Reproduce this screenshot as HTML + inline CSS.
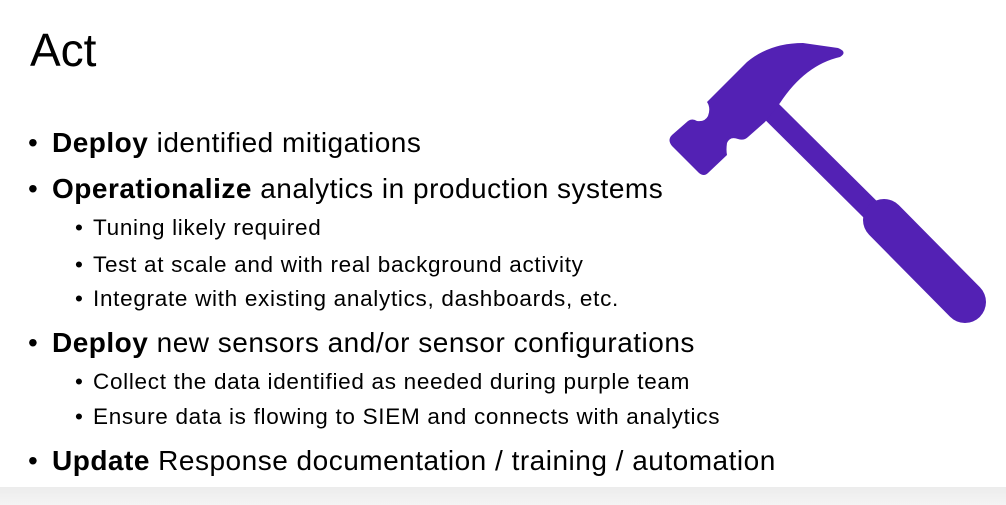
<!DOCTYPE html>
<html><head><meta charset="utf-8"><style>
html,body{margin:0;padding:0}
body{width:1006px;height:505px;background:#fff;position:relative;overflow:hidden;font-family:"Liberation Sans",sans-serif;color:#000}
.t{position:absolute;white-space:nowrap}
.h{left:30px;top:23px;font-size:46px}
.l1{font-size:28px;left:52px;letter-spacing:0.5px}
.l1:before{content:"•";position:absolute;left:-24px}
.l2{font-size:22.5px;left:93px;letter-spacing:0.7px}
.l2:before{content:"•";position:absolute;left:-18px}
.bar{position:absolute;left:0;top:487px;width:1006px;height:18px;background:linear-gradient(#ececec,#f4f4f4)}
</style></head><body>
<div class="t h">Act</div>
<div class="t l1" style="top:127px"><b>Deploy</b> identified mitigations</div>
<div class="t l1" style="top:173px"><b>Operationalize</b> analytics in production systems</div>
<div class="t l2" style="top:215px">Tuning likely required</div>
<div class="t l2" style="top:252px">Test at scale and with real background activity</div>
<div class="t l2" style="top:286px">Integrate with existing analytics, dashboards, etc.</div>
<div class="t l1" style="top:327px"><b>Deploy</b> new sensors and/or sensor configurations</div>
<div class="t l2" style="top:369px">Collect the data identified as needed during purple team</div>
<div class="t l2" style="top:404px">Ensure data is flowing to SIEM and connects with analytics</div>
<div class="t l1" style="top:445px"><b>Update</b> Response documentation / training / automation</div>
<div class="bar"></div>
<svg style="position:absolute;left:0;top:0" width="1006" height="505">
<g fill="#5321b4" stroke="#5321b4">
<line x1="760" y1="100" x2="885" y2="224" stroke-width="21"/>
<line x1="884" y1="220" x2="965" y2="302" stroke-width="42" stroke-linecap="round"/>
<path stroke="none" d="M707,102 L747,62 Q770,43 803,43 L838,48 Q848,52 840,57 Q805,65 780,103 L765,122 L748,137 Q744,141 738,139 Q730,136 727,143 Q726,150 727,155 L708,173 Q704,177 699,173 L672,146 Q667,140 672,135 L688,121 Q692,118 697,121 Q705,122 708,116 Q711,108 707,102 Z"/>
</g>
</svg>
</body></html>
